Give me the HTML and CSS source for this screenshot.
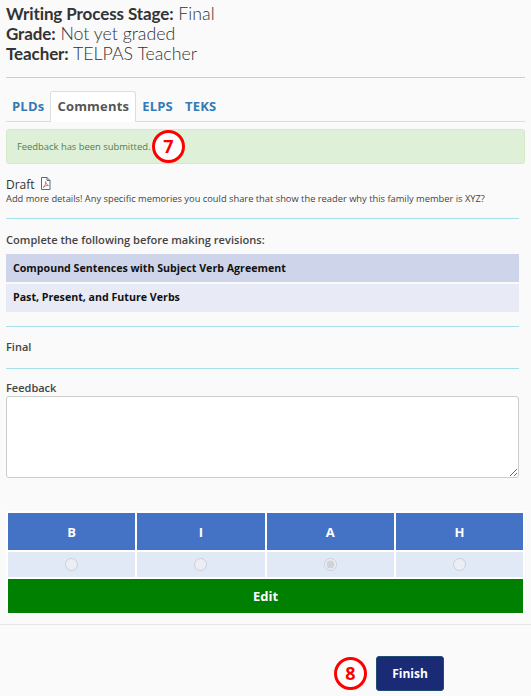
FILE: index.html
```html
<!DOCTYPE html>
<html lang="en">
<head>
  <meta charset="UTF-8">
  <title>Writing Feedback</title>
  <link rel="stylesheet" href="styles.css">
</head>
<body>

<div class="info">
  <div class="info-line"><b>Writing Process Stage:</b> Final</div>
  <div class="info-line"><b>Grade:</b> Not yet graded</div>
  <div class="info-line"><b>Teacher:</b> TELPAS Teacher</div>
</div>

<hr class="rule-top">

<ul class="tabs">
  <li>PLDs</li>
  <li class="active">Comments</li>
  <li>ELPS</li>
  <li>TEKS</li>
</ul>

<div class="alert">
  Feedback has been submitted.
  <span class="marker marker-seven">7</span>
</div>

<section class="comments">
  <div class="draft-title">Draft
    <svg class="pdf-icon" width="11" height="13" viewBox="0 0 11 13">
      <path d="M1.5 .5h5.5l3 3v9h-8.500z" fill="#fff" stroke="#5a6b7d"/>
      <path d="M7 .5v3h3" fill="none" stroke="#5a6b7d"/>
      <path d="M3 10.500c2-1 3-4 2.500-6 .5 2 1.500 3.500 3 4-2-.2-4 .5-5.500 2z" fill="none" stroke="#c0616b" stroke-width=".8"/>
    </svg>
  </div>
  <p class="draft-text">Add more details! Any specific memories you could share that show the reader why this family member is XYZ?</p>

  <hr class="rule rule-after-draft">

  <div class="label complete-label">Complete the following before making revisions:</div>
  <div class="skill skill-dark">Compound Sentences with Subject Verb Agreement</div>
  <div class="skill skill-light">Past, Present, and Future Verbs</div>

  <hr class="rule rule-after-skills">

  <div class="label final-label">Final</div>

  <hr class="rule rule-after-final">

  <div class="label feedback-label">Feedback</div>
  <textarea class="feedback"></textarea>
</section>

<table class="score">
  <thead>
    <tr>
      <th>B</th>
      <th>I</th>
      <th>A</th>
      <th>H</th>
    </tr>
  </thead>
  <tbody>
    <tr>
      <td><input type="radio" name="score" disabled></td>
      <td><input type="radio" name="score" disabled></td>
      <td><input type="radio" name="score" disabled checked></td>
      <td><input type="radio" name="score" disabled></td>
    </tr>
    <tr>
      <td colspan="4" class="edit-cell">Edit</td>
    </tr>
  </tbody>
</table>

<hr class="rule-bottom">

<div class="footer">
  <span class="marker">8</span>
  <button class="finish-btn">Finish</button>
</div>

</body>
</html>
```

FILE: styles.css
```css
html {
  height: 100%;
}
body {
  margin: 0;
  height: 696px;
  overflow: hidden;
  background-color: #fafafa;
  color: #333;
  font-family: "Open Sans", sans-serif;
  font-size: 11px;
}
.info {
  padding: 3px 6px 0;
  font-family: Lato, sans-serif;
  font-size: 17.800px;
  font-weight: 300;
  line-height: 20px;
  color: #333;
}
.info-line {
  height: 20px;
}
.info b {
  font-size: 17px;
  font-weight: 700;
  letter-spacing: -.1px;
}
hr {
  border: none;
  margin: 0;
}
.rule-top {
  margin: 14px 6px 0;
  height: 1px;
  background-color: #b5d8e0;
}
.tabs {
  display: flex;
  list-style: none;
  margin: 13px 6px 0;
  padding: 0;
  height: 31px;
  border-bottom: 1px solid #ddd;
  box-sizing: border-box;
  font-size: 13px;
  font-weight: 700;
  color: #337ab7;
}
.tabs li {
  padding: 0 6px;
  line-height: 30px;
  letter-spacing: .2px;
}
.tabs .active {
  height: 31px;
  color: #555;
  background-color: #fff;
  border: 1px solid #ddd;
  border-bottom: none;
  border-radius: 3px 3px 0 0;
  box-sizing: border-box;
  line-height: 28px;
}
.alert {
  position: relative;
  margin: 7px 6px 0;
  height: 35px;
  padding: 0 10px;
  display: flex;
  align-items: center;
  box-sizing: border-box;
  background-color: #dff0d8;
  border: 1px solid #d6e9c6;
  border-radius: 3px;
  color: #4f7f50;
  font-size: 9.400px;
}
.marker {
  display: inline-block;
  width: 33px;
  height: 33px;
  box-sizing: border-box;
  border: 3px solid #f00;
  border-radius: 50%;
  background-color: #fff;
  color: #f00;
  font-size: 18px;
  font-weight: 700;
  line-height: 27px;
  text-align: center;
}
.marker-seven {
  position: absolute;
  left: 145px;
  top: 0;
}
.comments {
  padding: 0 12px 0 6px;
}
.draft-title {
  margin-top: 13px;
  font-size: 12px;
  line-height: 15px;
  color: #333;
}
.pdf-icon {
  margin-left: 2px;
  vertical-align: -1px;
}
.draft-text {
  margin: 0;
  font-size: 9.320px;
  line-height: 13px;
  color: #444;
}
.rule {
  height: 1px;
  background-color: #a8e0ea;
}
.rule-after-draft {
  margin-top: 13px;
}
.label {
  font-size: 11px;
  font-weight: 600;
  color: #444;
}
.complete-label {
  margin-top: 13px;
  line-height: 16px;
  margin-bottom: 6px;
  font-size: 11.100px;
}
.skill {
  height: 28px;
  padding-left: 7px;
  line-height: 28px;
  font-size: 10.650px;
  font-weight: 700;
  color: #111;
}
.skill-dark {
  background-color: #ced4ea;
  margin-bottom: 2px;
}
.skill-light {
  background-color: #e8ebf5;
  line-height: 27px;
}
.rule-after-skills {
  margin-top: 14px;
}
.final-label {
  margin-top: 12px;
  line-height: 16px;
}
.rule-after-final {
  margin-top: 13px;
}
.feedback-label {
  margin-top: 11px;
  line-height: 16px;
}
.feedback {
  display: block;
  width: 100%;
  height: 82px;
  box-sizing: border-box;
  border: 1px solid #ccc;
  border-radius: 3px;
  background-color: #fff;
}
.score {
  width: 519px;
  margin: 33px 0 0 6px;
  border-collapse: collapse;
  table-layout: fixed;
}
.score th,
.score td {
  border: 2px solid #fff;
  padding: 0;
  text-align: center;
}
.score th {
  height: 37px;
  background-color: #4472c4;
  color: #fff;
  font-size: 13px;
  font-weight: 700;
}
.score td {
  height: 25px;
  background-color: #e2e9f6;
}
.score input {
  display: block;
  width: 13px;
  height: 13px;
  margin: 0 auto;
  opacity: .75;
}
.score .edit-cell {
  height: 34px;
  background-color: #008000;
  color: #fff;
  font-size: 13px;
  font-weight: 700;
}
.rule-bottom {
  margin-top: 9px;
  height: 1px;
  background-color: #e6e6e6;
}
.footer {
  display: flex;
  align-items: center;
  margin-top: 31px;
  padding-left: 334px;
}
.finish-btn {
  width: 68px;
  height: 35px;
  margin-left: 9px;
  border: 1px solid #204d74;
  border-radius: 3px;
  background-color: #1a2a75;
  color: #fff;
  font-family: "Open Sans", sans-serif;
  font-size: 12px;
  font-weight: 700;
}
```
